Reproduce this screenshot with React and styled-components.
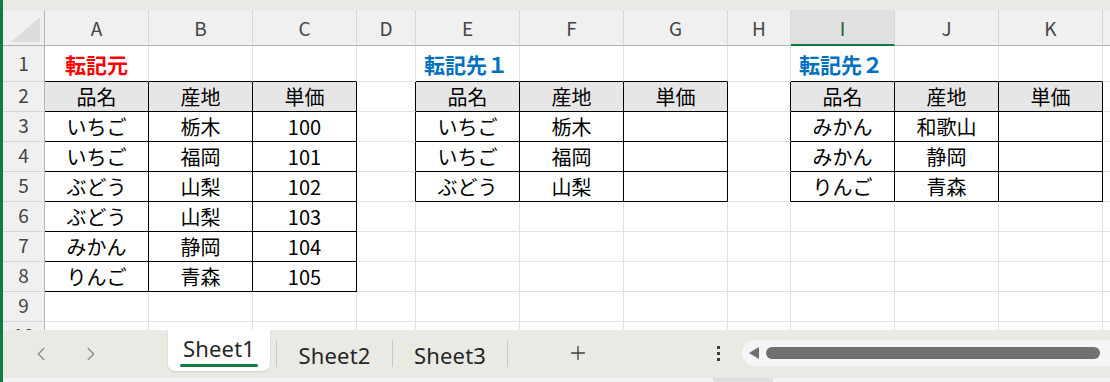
import React from "react";
import styled, { createGlobalStyle } from "styled-components";
import { ChevronLeft, ChevronRight, Plus } from "lucide-react";

const Global = createGlobalStyle`
  html, body { margin: 0; padding: 0; background: #ffffff; }
  body { font-family: "Noto Sans CJK JP", "Noto Sans", sans-serif; }
`;

const GREEN = "#107c41";
const GRID = "#e1e1e1";
const CJK = `"Noto Sans CJK JP", "Noto Sans", sans-serif`;

const Frame = styled.div`
  width: 1110px;
  height: 382px;
  display: flex;
  overflow: hidden;
  background: #ffffff;
`;

const GreenEdge = styled.div`
  width: 3px;
  flex: 0 0 3px;
  background: ${GREEN};
`;

const Main = styled.div`
  flex: 1;
  display: flex;
  flex-direction: column;
  min-width: 0;
`;

const TopStrip = styled.div`
  height: 10px;
  flex: 0 0 10px;
  background: #e9eae4;
`;

const Sheet = styled.div`
  flex: 0 0 320px;
  height: 320px;
  overflow: hidden;
  display: grid;
  grid-template-columns: 42px 104px 104px 104px 59px 104px 104px 104px 63px 104px 104px 104px 104px;
  grid-template-rows: 36px 36px repeat(9, 30px);
  background: #ffffff;
`;

const Corner = styled.div`
  box-sizing: border-box;
  background: #f0f0f0;
  border-right: 1px solid #b4b4b4;
  border-bottom: 1px solid #b4b4b4;
  display: flex;
  align-items: flex-end;
  justify-content: flex-end;
  padding: 0 4px 3px 0;
`;

const ColHead = styled.div`
  box-sizing: border-box;
  background: ${(p) => (p.$selected ? "#e0e0e0" : "#f0f0f0")};
  border-right: 1px solid #d6d6d6;
  border-bottom: ${(p) => (p.$selected ? `2px solid ${GREEN}` : "1px solid #b4b4b4")};
  display: flex;
  align-items: center;
  justify-content: center;
  font-family: ${CJK};
  font-size: 19px;
  color: ${(p) => (p.$selected ? "#1d5e37" : "#444444")};
  padding-top: ${(p) => (p.$selected ? "1px" : "0")};
`;

const RowHead = styled.div`
  box-sizing: border-box;
  background: #f0f0f0;
  border-right: 1px solid #b4b4b4;
  border-bottom: 1px solid #d6d6d6;
  display: flex;
  align-items: flex-start;
  justify-content: center;
  padding-top: ${(p) => (p.$tall ? "5px" : "1px")};
  font-family: ${CJK};
  font-size: 19px;
  line-height: 24px;
  color: #444444;
  overflow: hidden;
`;

const Cell = styled.div`
  box-sizing: border-box;
  position: relative;
  background: ${(p) => p.$bg || "transparent"};
  border-right: 1px solid ${(p) => (p.$rb ? "#000000" : GRID)};
  border-bottom: 1px solid ${(p) => (p.$bb ? "#000000" : GRID)};
  display: flex;
  align-items: center;
  justify-content: ${(p) => (p.$align === "left" ? "flex-start" : "center")};
  padding-left: ${(p) => (p.$align === "left" ? "8px" : "0")};
  white-space: nowrap;
  overflow: visible;
  font-family: ${CJK};
  font-size: ${(p) => (p.$title ? "21px" : "20px")};
  font-weight: ${(p) => (p.$title ? 700 : 400)};
  color: ${(p) => p.$color || "#000000"};
  z-index: ${(p) => (p.$title ? 2 : 1)};
`;

const TabBar = styled.div`
  flex: 0 0 48px;
  height: 48px;
  background: #e9eae4;
  display: flex;
  align-items: flex-start;
`;

const NavArea = styled.div`
  width: 165px;
  flex: 0 0 165px;
  height: 48px;
  display: flex;
  align-items: center;
  padding-left: 27px;
  gap: 28px;
  box-sizing: border-box;
  color: #8c8c8c;
`;

const ActiveTab = styled.div`
  width: 102px;
  flex: 0 0 102px;
  height: 41px;
  background: #ffffff;
  border-radius: 0 0 7px 7px;
  box-shadow: 0 1px 2px rgba(0, 0, 0, 0.12);
  display: flex;
  flex-direction: column;
  align-items: center;
  justify-content: flex-start;
  box-sizing: border-box;
  padding-top: 4px;
`;

const TabLabel = styled.span`
  font-family: "Noto Sans", "Open Sans", sans-serif;
  font-size: 22px;
  line-height: 28px;
  letter-spacing: 0.2px;
  color: #262626;
`;

const Underline = styled.div`
  width: 78px;
  height: 3px;
  border-radius: 2px;
  background: ${GREEN};
  margin-top: 2px;
`;

const Tab = styled.div`
  width: ${(p) => p.$w}px;
  flex: 0 0 ${(p) => p.$w}px;
  height: 48px;
  display: flex;
  align-items: center;
  justify-content: center;
  padding-top: 2px;
  box-sizing: border-box;
`;

const Sep = styled.div`
  width: 1px;
  flex: 0 0 1px;
  height: 27px;
  margin-top: 10px;
  margin-left: ${(p) => p.$ml || 0}px;
  background: #c9c9c4;
`;

const IconButton = styled.div`
  width: ${(p) => p.$w}px;
  flex: 0 0 ${(p) => p.$w}px;
  margin-left: ${(p) => p.$ml || 0}px;
  height: 46px;
  display: flex;
  align-items: center;
  justify-content: center;
  color: #3c3c3c;
`;

const Dots = styled.div`
  display: flex;
  flex-direction: column;
  gap: 3px;
  & > span {
    width: 3px;
    height: 3px;
    background: #3c3c3c;
    display: block;
  }
`;

const ScrollTrack = styled.div`
  flex: 1;
  margin-left: 4px;
  margin-top: 10px;
  height: 26px;
  background: #f5f5f5;
  border-radius: 13px 0 0 13px;
  display: flex;
  align-items: center;
  padding-left: 7px;
  gap: 7px;
  box-sizing: border-box;
`;

const ArrowLeft = styled.div`
  width: 0;
  height: 0;
  border-top: 6px solid transparent;
  border-bottom: 6px solid transparent;
  border-right: 10px solid #6f6f6f;
`;

const Thumb = styled.div`
  width: 334px;
  height: 12px;
  border-radius: 6px;
  background: #707070;
`;

const BottomStrip = styled.div`
  flex: 0 0 4px;
  height: 4px;
  background: #f3f3f3;
  display: flex;
`;

const BottomThumb = styled.div`
  margin-left: 710px;
  width: 60px;
  height: 4px;
  background: #dedede;
`;

const COLS = ["A", "B", "C", "D", "E", "F", "G", "H", "I", "J", "K", ""];

const HEAD = ["品名", "産地", "単価"];
const TABLES = [
  {
    c0: 0,
    rows: [
      ["いちご", "栃木", "100"],
      ["いちご", "福岡", "101"],
      ["ぶどう", "山梨", "102"],
      ["ぶどう", "山梨", "103"],
      ["みかん", "静岡", "104"],
      ["りんご", "青森", "105"],
    ],
  },
  {
    c0: 4,
    rows: [
      ["いちご", "栃木", ""],
      ["いちご", "福岡", ""],
      ["ぶどう", "山梨", ""],
    ],
  },
  {
    c0: 8,
    rows: [
      ["みかん", "和歌山", ""],
      ["みかん", "静岡", ""],
      ["りんご", "青森", ""],
    ],
  },
];

const TITLES = {
  0: { text: "転記元", color: "#ff0000", align: "center" },
  4: { text: "転記先１", color: "#0070c0", align: "left" },
  8: { text: "転記先２", color: "#0070c0", align: "left" },
};

function inTable(r, c) {
  for (const t of TABLES) {
    const last = 2 + t.rows.length;
    if (c >= t.c0 && c <= t.c0 + 2 && r >= 2 && r <= last) return { t, last };
  }
  return null;
}

function cellInfo(r, c) {
  const own = inTable(r, c);
  const right = inTable(r, c + 1);
  const below = inTable(r + 1, c);
  const info = {
    rb: !!own || !!right,
    bb: !!own || !!(below && r + 1 === 2),
    text: "",
    bg: undefined,
  };
  if (own) {
    const k = c - own.t.c0;
    if (r === 2) {
      info.text = HEAD[k];
      info.bg = "#e7e6e6";
    } else {
      info.text = own.t.rows[r - 3][k];
    }
  }
  return info;
}

export default function App() {
  const cells = [];
  cells.push(
    <Corner key="corner">
      <svg width="29" height="25" viewBox="0 0 29 25">
        <polygon points="0,25 29,25 29,0" fill="#dcdcdc" />
      </svg>
    </Corner>
  );
  COLS.forEach((l, i) =>
    cells.push(
      <ColHead key={"h" + i} $selected={i === 8}>
        {l}
      </ColHead>
    )
  );
  for (let r = 1; r <= 10; r++) {
    cells.push(
      <RowHead key={"r" + r} $tall={r === 1}>
        {r}
      </RowHead>
    );
    for (let c = 0; c < COLS.length; c++) {
      const info = cellInfo(r, c);
      const title = r === 1 ? TITLES[c] : null;
      cells.push(
        <Cell
          key={r + "-" + c}
          $rb={info.rb}
          $bb={info.bb}
          $bg={info.bg}
          $title={!!title}
          $align={title ? title.align : "center"}
          $color={title ? title.color : undefined}
        >
          {title ? title.text : info.text}
        </Cell>
      );
    }
  }

  return (
    <>
      <Global />
      <Frame>
        <GreenEdge />
        <Main>
          <TopStrip />
          <Sheet>{cells}</Sheet>
          <TabBar>
            <NavArea>
              <ChevronLeft size={22} strokeWidth={1.5} />
              <ChevronRight size={22} strokeWidth={1.5} />
            </NavArea>
            <ActiveTab>
              <TabLabel>Sheet1</TabLabel>
              <Underline />
            </ActiveTab>
            <Sep $ml={6} />
            <Tab $w={115}>
              <TabLabel>Sheet2</TabLabel>
            </Tab>
            <Sep />
            <Tab $w={114}>
              <TabLabel>Sheet3</TabLabel>
            </Tab>
            <Sep />
            <IconButton $w={140}>
              <Plus size={22} strokeWidth={1.4} />
            </IconButton>
            <IconButton $w={40} $ml={50}>
              <Dots>
                <span />
                <span />
                <span />
              </Dots>
            </IconButton>
            <ScrollTrack>
              <ArrowLeft />
              <Thumb />
            </ScrollTrack>
          </TabBar>
          <BottomStrip>
            <BottomThumb />
          </BottomStrip>
        </Main>
      </Frame>
    </>
  );
}
